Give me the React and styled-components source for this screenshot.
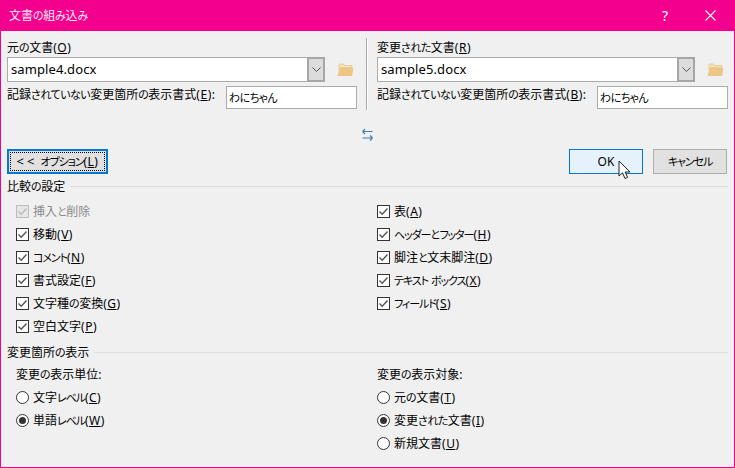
import React from "react";
import styled, { createGlobalStyle } from "styled-components";

const Global = createGlobalStyle`
  html, body { margin: 0; padding: 0; background: #f0f0f0; }
  #root { width: 735px; height: 468px; }
`;

const PINK = "#f4008e";
const FONT = `"Noto Sans", "Noto Sans CJK JP", sans-serif`;

const Window = styled.div`
  width: 735px; height: 468px; box-sizing: border-box;
  border: 1px solid ${PINK}; border-top: 0;
  background: #f0f0f0; color: #000;
  font: 12px/16px ${FONT};
  font-feature-settings: "palt";
  display: flex; flex-direction: column;
`;
const TitleBar = styled.div`
  height: 31px; flex: none; background: ${PINK}; color: #fbe6f3;
  display: flex; align-items: center; padding-left: 8px;
`;
const TitleText = styled.span` flex: 1; font-size: 12px; `;
const HelpGlyph = styled.span`
  width: 46px; text-align: center; font-size: 14px; color: #fff; margin-right: -1px;
`;
const CloseButton = styled.span`
  width: 46px; height: 31px; display: flex; align-items: center; justify-content: center;
  margin-right: 1px;
`;
const Body = styled.div`
  flex: 1; display: flex; flex-direction: column; padding: 0 6px;
`;
const FilePanes = styled.div`
  display: flex; padding-top: 7px; height: 72px;
`;
const Pane = styled.div`
  width: ${p => p.$w}px; flex: none;
`;
const Divider = styled.div`
  width: 2px; flex: none; margin: 0 9px; height: 72px;
  background: linear-gradient(to right, #a8a8a8 1px, #fff 1px);
`;
const PaneLabel = styled.div` height: 19px; line-height: 17px; padding-top: 1px; box-sizing: border-box; `;
const ComboRow = styled.div` display: flex; align-items: center; height: 25px; `;
const Combo = styled.div`
  width: 318px; height: 25px; box-sizing: border-box; display: flex;
  background: #fff; border: 1px solid #ababab; border-right: 0;
`;
const ComboText = styled.div`
  flex: 1; padding-left: 3px; font-size: 13px; line-height: 22px; letter-spacing: 0.1px;
`;
const ComboArrow = styled.div`
  width: 18px; box-sizing: border-box; margin: -1px 0; background: #dcdcdc;
  border: 2px solid #a6a6a6; display: flex; align-items: center; justify-content: center;
`;
const FolderWrap = styled.div` margin-left: 12px; width: 17px; height: 14px; display: flex; `;
const FormatRow = styled.div`
  display: flex; justify-content: space-between; align-items: flex-start; margin-top: 4px;
`;
const FormatLabel = styled.div` line-height: 16px; padding-top: 1px; `;
const TextInput = styled.div`
  width: 131px; height: 23px; box-sizing: border-box; background: #fff;
  border: 1px solid #ababab; padding-left: 2px; line-height: 22px;
`;
const SwapRow = styled.div`
  height: 39px; display: flex; align-items: flex-start; justify-content: center; padding-top: 18px; box-sizing: border-box;
`;
const ButtonRow = styled.div`
  height: 25px; display: flex; align-items: stretch;
`;
const OptionsButton = styled.div`
  width: 101px; box-sizing: border-box; border: 2px solid #0078d7; background: #e1e1e1;
  padding: 1px; display: flex;
`;
const FocusRing = styled.div`
  flex: 1; border: 1px dotted #000; display: flex; align-items: center; justify-content: center;
  line-height: 15px;
`;
const Chevrons = styled.span` font-size: 13px; letter-spacing: 3px; `;
const Spacer = styled.div` flex: 1; `;
const PushButton = styled.div`
  position: relative; width: 74px; box-sizing: border-box; margin-right: ${p => p.$mr || 0}px;
  border: 1px solid ${p => (p.$hot ? "#0078d7" : "#adadad")};
  background: ${p => (p.$hot ? "#e5f1fb" : "#e1e1e1")};
  display: flex; align-items: center; justify-content: center;
`;
const Cursor = styled.svg`
  position: absolute; left: 48px; top: 10px; width: 13px; height: 20px;
`;
const SectionHead = styled.div`
  display: flex; align-items: center; height: 16px; margin-top: ${p => p.$mt}px;
  &::after { content: ""; flex: 1; height: 1px; background: #dcdcdc; margin-left: 5px; margin-top: -2px; }
`;
const Columns = styled.div`
  display: grid; grid-template-columns: 361px 1fr; padding-left: 9px;
  margin-top: ${p => p.$mt || 0}px;
`;
const OptionList = styled.div` display: flex; flex-direction: column; `;
const Row = styled.div`
  height: 23px; display: flex; align-items: center; gap: 4px;
  color: ${p => (p.$off ? "#8a8a8a" : "inherit")};
`;
const Box = styled.span`
  width: 13px; height: 13px; box-sizing: border-box; flex: none;
  border: 1px solid ${p => (p.$off ? "#bcbcbc" : "#333")}; background: ${p => (p.$off ? "#e6e6e6" : "#fff")};
  display: flex;
`;
const Circle = styled.span`
  width: 13px; height: 13px; box-sizing: border-box; flex: none; border-radius: 50%;
  border: 1px solid #333; background: #fff; display: flex; align-items: center; justify-content: center;
  &::after { content: ""; width: 7px; height: 7px; border-radius: 50%; background: ${p => (p.$on ? "#333" : "transparent")}; }
`;
const ColumnTitle = styled.div` height: 16px; margin-top: 6px; margin-bottom: 3px; `;
const Accel = styled.span` letter-spacing: 0.5px; `;
const Key = styled.span` text-decoration: underline; text-underline-offset: 1px; `;
/* Kana in the original UI font are much narrower than in Noto Sans CJK. */
const Kana = styled.span`
  font-size: 11px;
  letter-spacing: ${p => (p.$kata ? "-1.1px" : "-0.5px")};
`;

const Jp = ({ children }) => (
  <>
    {String(children).split(/([\u3040-\u309f]+|[\u30a0-\u30ff]+)/).map((part, i) => {
      if (!part) return null;
      if (/^[\u3040-\u309f]/.test(part)) return <Kana key={i}>{part}</Kana>;
      if (/^[\u30a0-\u30ff]/.test(part)) return <Kana key={i} $kata>{part}</Kana>;
      return part;
    })}
  </>
);

const Label = ({ text, k }) => (
  <span><Jp>{text}</Jp>{k ? <Accel>(<Key>{k}</Key>)</Accel> : null}</span>
);

const Check = ({ text, k, off }) => (
  <Row $off={off}>
    <Box $off={off}>
      <svg width="11" height="11" viewBox="0 0 11 11">
        <path d="M1.5 5.5 L4.2 8.2 L9.5 2.5" fill="none" stroke={off ? "#bcbcbc" : "#555"} strokeWidth="1.4" />
      </svg>
    </Box>
    <Label text={text} k={k} />
  </Row>
);

const Radio = ({ text, k, on }) => (
  <Row>
    <Circle $on={on} />
    <Label text={text} k={k} />
  </Row>
);

const Folder = () => (
  <svg width="17" height="14" viewBox="0 0 17 14">
    <path d="M2 3 V1.5 L3 1 H6.5 L7.5 2.5 H15 V4.5 H3.5 L2 7 Z" fill="#f6e3bd" stroke="#e6c387" strokeWidth="0.8" />
    <path d="M0.5 13 L2.8 5 H16.5 L15 13 Z" fill="#ecc682" />
  </svg>
);

const Chevron = () => (
  <svg width="9" height="5" viewBox="0 0 9 5">
    <path d="M0.5 0.5 L4.5 4.5 L8.5 0.5" fill="none" stroke="#555" strokeWidth="1" />
  </svg>
);

const FilePane = ({ w, title, k, file, fmtKey, input }) => (
  <Pane $w={w}>
    <PaneLabel><Label text={title} k={k} /></PaneLabel>
    <ComboRow>
      <Combo>
        <ComboText>{file}</ComboText>
        <ComboArrow><Chevron /></ComboArrow>
      </Combo>
      <FolderWrap><Folder /></FolderWrap>
    </ComboRow>
    <FormatRow>
      <FormatLabel><Label text="記録されていない変更箇所の表示書式" k={fmtKey} />:</FormatLabel>
      <TextInput><Jp>{input}</Jp></TextInput>
    </FormatRow>
  </Pane>
);

export default function App() {
  return (
    <Window>
      <Global />
      <TitleBar>
        <TitleText><Jp>文書の組み込み</Jp></TitleText>
        <HelpGlyph>?</HelpGlyph>
        <CloseButton>
          <svg width="11" height="11" viewBox="0 0 11 11">
            <path d="M0.5 0.5 L10.5 10.5 M10.5 0.5 L0.5 10.5" stroke="#fff" strokeWidth="1.1" />
          </svg>
        </CloseButton>
      </TitleBar>
      <Body>
        <FilePanes>
          <FilePane w={350} title="元の文書" k="O" file="sample4.docx" fmtKey="E" input="わにちゃん" />
          <Divider />
          <FilePane w={351} title="変更された文書" k="R" file="sample5.docx" fmtKey="B" input="わにちゃん" />
        </FilePanes>
        <SwapRow>
          <svg width="11" height="13" viewBox="0 0 11 13">
            <path d="M0.5 3.5 H10.5 M0.5 3.5 L3 1 M0.5 3.5 L3 6" fill="none" stroke="#3f79b5" strokeWidth="1.1" />
            <path d="M0.5 10 H10.5 M10.5 10 L8 7.5 M10.5 10 L8 12.5" fill="none" stroke="#3f79b5" strokeWidth="1.1" />
          </svg>
        </SwapRow>
        <ButtonRow>
          <OptionsButton>
            <FocusRing><span><Chevrons>&lt;&lt;</Chevrons> <Jp>オプション</Jp><Accel>(<Key>L</Key>)</Accel></span></FocusRing>
          </OptionsButton>
          <Spacer />
          <PushButton $hot $mr={10}>
            OK
            <Cursor viewBox="0 0 13 20">
              <path d="M1 1 V16 L4.5 12.8 L7 18.5 L9.6 17.3 L7.2 12 H12 Z" fill="#fff" stroke="#222" strokeWidth="1" />
            </Cursor>
          </PushButton>
          <PushButton $mr={1}><Jp>キャンセル</Jp></PushButton>
        </ButtonRow>
        <SectionHead $mt={5}><span><Jp>比較の設定</Jp></span></SectionHead>
        <Columns $mt={5}>
          <OptionList>
            <Check off text="挿入と削除" />
            <Check text="移動" k="V" />
            <Check text="コメント" k="N" />
            <Check text="書式設定" k="F" />
            <Check text="文字種の変換" k="G" />
            <Check text="空白文字" k="P" />
          </OptionList>
          <OptionList>
            <Check text="表" k="A" />
            <Check text="ヘッダーとフッター" k="H" />
            <Check text="脚注と文末脚注" k="D" />
            <Check text="テキスト ボックス" k="X" />
            <Check text="フィールド" k="S" />
          </OptionList>
        </Columns>
        <SectionHead $mt={7}><span><Jp>変更箇所の表示</Jp></span></SectionHead>
        <Columns>
          <OptionList>
            <ColumnTitle><Jp>変更の表示単位:</Jp></ColumnTitle>
            <Radio text="文字レベル" k="C" />
            <Radio on text="単語レベル" k="W" />
          </OptionList>
          <OptionList>
            <ColumnTitle><Jp>変更の表示対象:</Jp></ColumnTitle>
            <Radio text="元の文書" k="T" />
            <Radio on text="変更された文書" k="I" />
            <Radio text="新規文書" k="U" />
          </OptionList>
        </Columns>
      </Body>
    </Window>
  );
}
